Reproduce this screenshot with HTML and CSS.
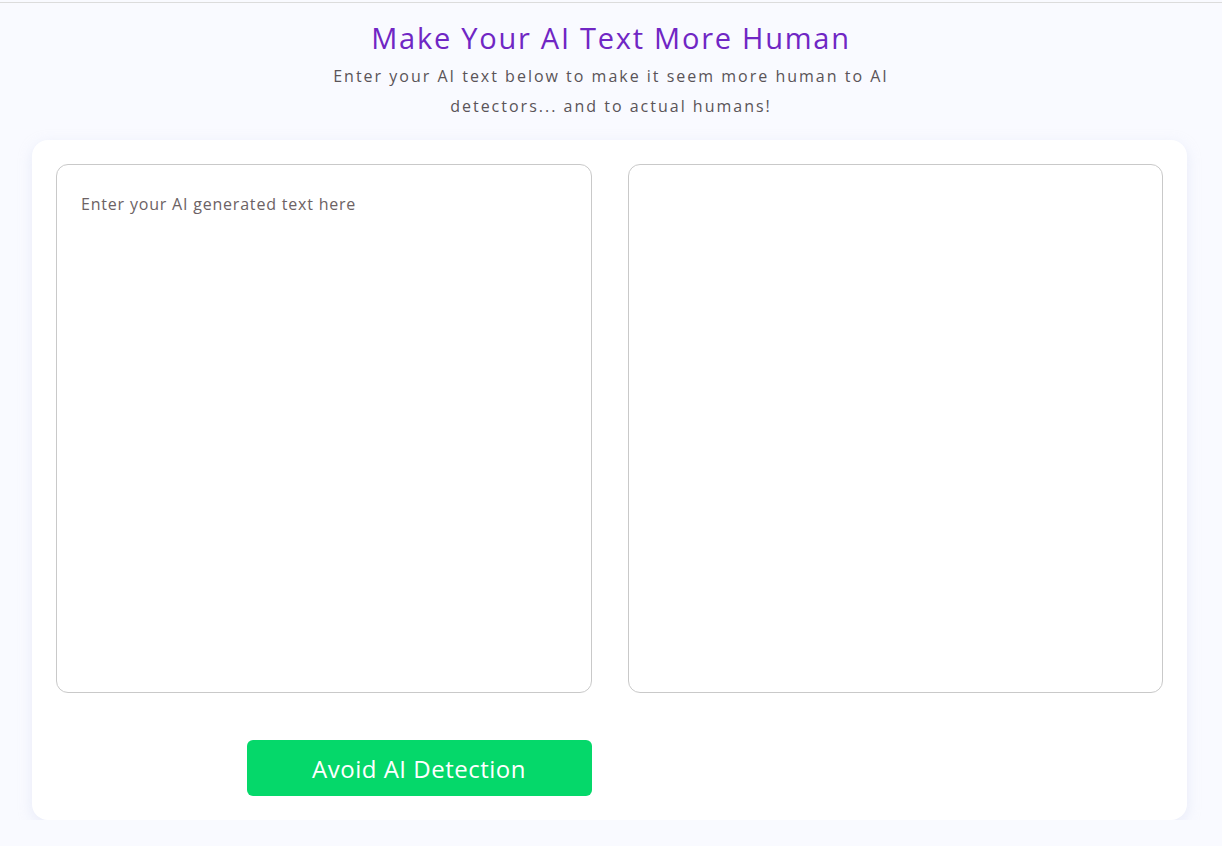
FILE: index.html
```html
<!DOCTYPE html>
<html lang="en">
<head>
<meta charset="utf-8">
<title>Make Your AI Text More Human</title>
<link rel="stylesheet" href="styles.css">
</head>
<body>
<div class="topline"></div>
<header class="hero">
  <h1 class="title">Make Your AI Text More Human</h1>
  <p class="subtitle">Enter your AI text below to make it seem more human to AI detectors... and to actual humans!</p>
</header>
<main class="card">
  <div class="panes">
    <textarea class="pane" placeholder="Enter your AI generated text here"></textarea>
    <div class="pane output"></div>
  </div>
  <div class="actions">
    <div class="action-col">
      <button class="btn">Avoid AI Detection</button>
    </div>
    <div class="action-col"></div>
  </div>
</main>
</body>
</html>
```
FILE: styles.css
```css
html, body {
  margin: 0;
  padding: 0;
}
body {
  background: #f9faff;
  font-family: "Open Sans", "Noto Sans", sans-serif;
  color: #555;
}
.topline {
  margin-top: 2px;
  height: 1px;
  background: #dcdcdc;
}
.hero {
  text-align: center;
  padding-top: 17px;
}
.title {
  margin: 0;
  font-size: 29px;
  font-weight: 500;
  line-height: 36px;
  letter-spacing: 1.75px;
  color: #7026c4;
}
.subtitle {
  margin: 5px auto 0;
  width: 610px;
  font-size: 16px;
  line-height: 30px;
  letter-spacing: 2px;
  color: #5a5458;
}
.card {
  margin: 19px 0 0 32px;
  width: 1155px;
  box-sizing: border-box;
  background: #fff;
  border-radius: 16px;
  box-shadow: 0 4px 14px rgba(200, 210, 235, 0.35);
  padding: 24px 24px 24px;
}
.panes {
  display: grid;
  grid-template-columns: 1fr 1fr;
  gap: 36px;
}
.pane {
  display: block;
  box-sizing: border-box;
  height: 529px;
  width: 100%;
  border: 1px solid #c9c9c9;
  border-radius: 12px;
  background: #fff;
  padding: 28px 24px;
  font-family: inherit;
  font-size: 16px;
  letter-spacing: 0.8px;
  color: #444;
  resize: none;
  outline: none;
  margin: 0;
}
.pane::placeholder {
  color: #6c6264;
}
.actions {
  display: grid;
  grid-template-columns: 1fr 1fr;
  gap: 36px;
  margin-top: 47px;
}
.action-col {
  display: flex;
  justify-content: flex-end;
}
.btn {
  width: 345px;
  height: 56px;
  border: none;
  border-radius: 6px;
  background: #05d86a;
  color: #fff;
  font-family: inherit;
  font-size: 24px;
  letter-spacing: 0.5px;
  font-weight: 400;
  cursor: pointer;
}
```
